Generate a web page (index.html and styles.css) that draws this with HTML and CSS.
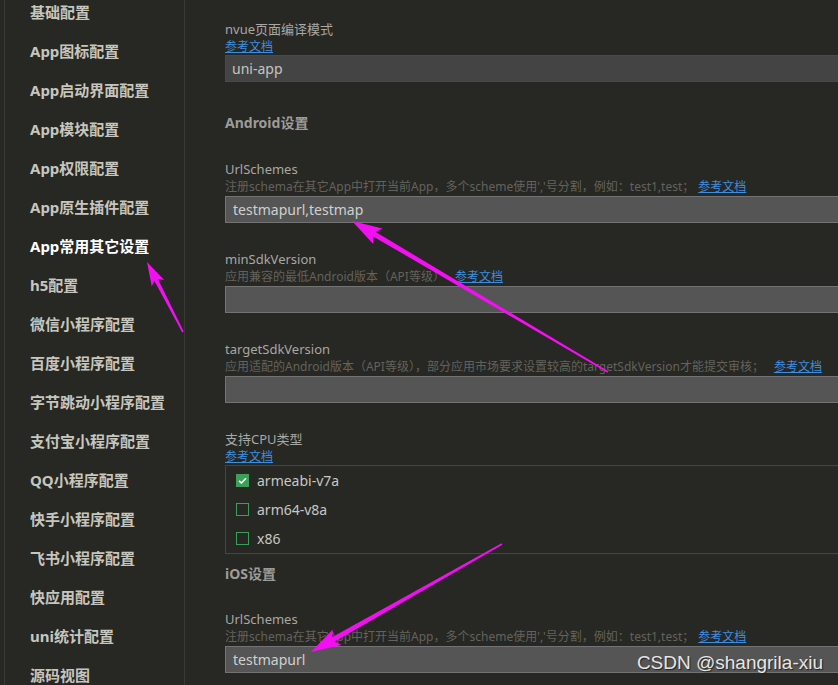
FILE: index.html
```html
<!DOCTYPE html>
<html lang="zh">
<head>
<meta charset="utf-8">
<title>manifest</title>
<link rel="stylesheet" href="styles.css">
</head>
<body>
<div class="app">
  <aside class="sidebar">
    <ul class="nav">
      <li>基础配置</li>
      <li>App图标配置</li>
      <li>App启动界面配置</li>
      <li>App模块配置</li>
      <li>App权限配置</li>
      <li>App原生插件配置</li>
      <li class="active">App常用其它设置</li>
      <li>h5配置</li>
      <li>微信小程序配置</li>
      <li>百度小程序配置</li>
      <li>字节跳动小程序配置</li>
      <li>支付宝小程序配置</li>
      <li>QQ小程序配置</li>
      <li>快手小程序配置</li>
      <li>飞书小程序配置</li>
      <li>快应用配置</li>
      <li>uni统计配置</li>
      <li>源码视图</li>
    </ul>
  </aside>
  <main class="content">
    <div class="field">
      <div class="label">nvue页面编译模式</div>
      <a class="link">参考文档</a>
      <div class="input dark">uni-app</div>
    </div>

    <h3 class="section first">Android设置</h3>

    <div class="field">
      <div class="label">UrlSchemes</div>
      <div class="desc">注册schema在其它App中打开当前App，多个scheme使用','号分割，例如：test1,test；<a class="link">参考文档</a></div>
      <div class="input">testmapurl,testmap</div>
    </div>
    <div class="field">
      <div class="label">minSdkVersion</div>
      <div class="desc">应用兼容的最低Android版本（API等级）<a class="link wide">参考文档</a></div>
      <div class="input"></div>
    </div>
    <div class="field">
      <div class="label">targetSdkVersion</div>
      <div class="desc">应用适配的Android版本（API等级），部分应用市场要求设置较高的targetSdkVersion才能提交审核；<a class="link wide">参考文档</a></div>
      <div class="input"></div>
    </div>
    <div class="field">
      <div class="label">支持CPU类型</div>
      <a class="link">参考文档</a>
      <div class="checklist">
        <div class="check"><span class="box on"><svg viewBox="0 0 13 13" width="13" height="13"><path d="M3 6.8 L5.4 9 L10 4.2" fill="none" stroke="#fff" stroke-width="1.6"/></svg></span>armeabi-v7a</div>
        <div class="check"><span class="box"></span>arm64-v8a</div>
        <div class="check"><span class="box"></span>x86</div>
      </div>
    </div>

    <h3 class="section second">iOS设置</h3>

    <div class="field">
      <div class="label">UrlSchemes</div>
      <div class="desc">注册schema在其它App中打开当前App，多个scheme使用','号分割，例如：test1,test；<a class="link">参考文档</a></div>
      <div class="input">testmapurl</div>
    </div>
  </main>
</div>

<svg class="annot" width="838" height="685" viewBox="0 0 838 685">
  <polygon fill="#f20ff2" points="147,262 151.8,286.5 154.3,280.7 182.3,332.4 183.7,331.6 157.9,278.9 164.2,280.1"/>
  <polygon fill="#f20ff2" points="352,221 373.2,243.9 373.1,236.4 607.6,372.7 608.4,371.3 375.7,232 382.4,228.5"/>
  <polygon fill="#f20ff2" points="311,652 341.5,645 334.8,641.4 502.4,544.7 501.6,543.3 332.4,637 332.7,629.4"/>
</svg>

<div class="watermark">CSDN @shangrila-xiu</div>
</body>
</html>
```

FILE: styles.css
```css
* { box-sizing: border-box; }

html, body {
  margin: 0;
  padding: 0;
  width: 838px;
  height: 685px;
  overflow: hidden;
  background: #272723;
  font-family: "Noto Sans", "Noto Sans CJK SC", sans-serif;
}

.app {
  display: flex;
  height: 685px;
  position: relative;
}

.sidebar {
  width: 181px;
  margin-left: 4px;
  border-left: 1px solid #3a3a36;
  border-right: 1px solid #3a3a36;
  flex: none;
  overflow: hidden;
}

.nav {
  list-style: none;
  margin: -7px 0 0 0;
  padding: 0;
}

.nav li {
  height: 39px;
  line-height: 39px;
  padding-left: 25px;
  font-size: 15px;
  font-weight: bold;
  color: #c6c6be;
  white-space: nowrap;
}

.nav li.active {
  color: #ffffff;
}

.content {
  flex: 1;
  display: flex;
  flex-direction: column;
  padding: 21px 0 0 40px;
  margin-right: -30px;
  min-width: 0;
}

.label {
  font-size: 13px;
  line-height: 17px;
  height: 17px;
  color: #a8a8a4;
  white-space: nowrap;
}

.desc {
  font-size: 12px;
  line-height: 17px;
  height: 17px;
  color: #63635c;
  white-space: nowrap;
}

.link {
  display: block;
  font-size: 12px;
  line-height: 17px;
  height: 17px;
  color: #3b8fe0;
  text-decoration: underline;
  cursor: pointer;
}

.desc .link {
  display: inline;
  margin-left: 4px;
}

.desc .link.wide {
  margin-left: 10px;
}

.field {
  margin-bottom: 28px;
}

.input {
  height: 27px;
  margin-top: 1px;
  background: #555555;
  border: 1px solid #737373;
  color: #d0d0cc;
  font-size: 14px;
  line-height: 25px;
  padding-left: 7px;
  white-space: nowrap;
}

.input.dark {
  margin-top: 0;
  background: #444444;
  border-color: #4a4a4a;
  color: #c4c4c0;
  padding-left: 6px;
}

.section {
  margin: 0;
  font-size: 14px;
  line-height: 20px;
  font-weight: bold;
  color: #9c9c98;
}

.section.first {
  margin-top: 3px;
  margin-bottom: 28px;
}

.section.second {
  margin-top: -18px;
  margin-bottom: 27px;
}

.checklist {
  border: 1px solid #454542;
  height: 89px;
}

.check {
  display: flex;
  align-items: center;
  height: 29px;
  padding-left: 10px;
  gap: 8px;
  font-size: 14px;
  color: #c8c8c4;
}

.box {
  width: 13px;
  height: 13px;
  border: 1px solid #3c9e5a;
  flex: none;
  display: flex;
}

.box.on {
  background: #3c9e5a;
  border-color: #3c9e5a;
}

.box svg {
  margin: -1px;
}

.annot {
  position: absolute;
  left: 0;
  top: 0;
  pointer-events: none;
}

.watermark {
  position: absolute;
  right: 15px;
  top: 652px;
  font-family: "Liberation Sans", Arial, sans-serif;
  font-size: 19px;
  color: #e6e6e6;
  text-shadow: 1px 1px 1px #222;
  white-space: nowrap;
}
```
